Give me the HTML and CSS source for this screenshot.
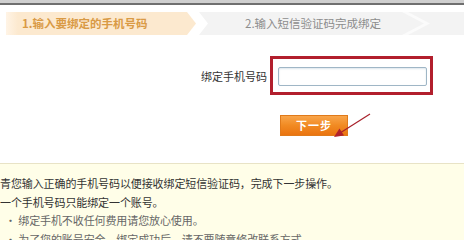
FILE: index.html
```html
<!DOCTYPE html>
<html>
<head>
    <meta charset="utf-8">
    <link rel="stylesheet" href="styles.css">
</head>
<body>
    <div class="topbar"></div>

    <div class="steps">
        <div class="step step-on">1.输入要绑定的手机号码</div>
        <div class="step step-off">2.输入短信验证码完成绑定</div>
    </div>

    <div class="form">
        <div class="row">
            <label class="label" for="phone">绑定手机号码</label>
            <div class="mark"><input class="phone" id="phone" type="text"></div>
        </div>
        <a href="#" class="next">下一步</a>

        <!-- red pointer drawn over the form -->
        <svg class="pointer" width="464" height="110" viewBox="0 0 464 110">
            <line x1="370" y1="58" x2="340" y2="77" stroke="#a8202a" stroke-width="1.2"/>
            <polygon points="334,81 344,79.5 339.5,72.5" fill="#b0222c"/>
        </svg>
    </div>

    <div class="tips">
        <p class="tip-main">青您输入正确的手机号码以便接收绑定短信验证码，完成下一步操作。</p>
        <p class="tip-main">一个手机号码只能绑定一个账号。</p>
        <p class="tip-item">• 绑定手机不收任何费用请您放心使用。</p>
        <p class="tip-item">• 为了您的账号安全，绑定成功后，请不要随意修改联系方式。</p>
    </div>
</body>
</html>
```

FILE: styles.css
```css
body, html {
margin: 0;
padding: 0;
background: #fff;
font-family: "Noto Sans CJK SC", "DejaVu Sans", sans-serif;
}

.topbar {
height: 3px;
background-color: #cfcfcf;
border-bottom: 2px solid #6f6f6f;
}

.steps {
display: flex;
margin-top: 7px;
height: 23px;
padding-left: 6px;
}

.step {
height: 23px;
line-height: 23px;
font-size: 11.5px;
white-space: nowrap;
}

.step-on {
width: 190px;
padding-left: 16px;
box-sizing: border-box;
font-weight: bold;
color: #d99a45;
background: linear-gradient(to right, #fff4e6, #fce9cf 12px, #fce9cf);
clip-path: polygon(0 0, 181px 0, 100% 50%, 181px 100%, 0 100%);
}

.step-off {
position: relative;
flex: 1;
margin-left: 3px;
padding-left: 46px;
color: #8c8c8c;
background-color: #f3f3f3;
clip-path: polygon(0 0, 100% 0, 100% 100%, 0 100%, 9px 50%);
}

.step-off::after {
content: "";
position: absolute;
left: 203px;
top: 0;
width: 28px;
height: 23px;
background-color: #fbfbfb;
clip-path: polygon(0 0, 6px 0, 100% 50%, 6px 100%, 0 100%, 22px 50%);
}

.form {
position: relative;
}

.row {
display: flex;
align-items: center;
margin-top: 21px;
}

.label {
width: 267px;
text-align: right;
font-size: 11px;
color: #333;
}

.mark {
margin-left: 3px;
width: 163px;
height: 39px;
box-sizing: border-box;
border: 3px solid #b21f2d;
padding: 8px 3px 6px 5px;
}

.phone {
display: block;
width: 149px;
height: 19px;
box-sizing: border-box;
margin: 0;
padding: 0 4px;
border: 1px solid #9fb6c6;
border-radius: 2px;
box-shadow: inset 0 1px 2px #dde6ec;
outline: none;
}

.next {
display: block;
margin-top: 20px;
margin-left: 280px;
width: 68px;
height: 21px;
box-sizing: border-box;
line-height: 19px;
text-align: center;
text-decoration: none;
font-size: 11px;
font-weight: bold;
letter-spacing: 1px;
color: #fff;
border: 1px solid #e07a1a;
background: linear-gradient(to bottom, #f9a54a, #f18a22 50%, #ea7410);
}

.pointer {
position: absolute;
left: 0;
top: 0;
pointer-events: none;
}

.tips {
margin-top: 27px;
height: 77px;
box-sizing: border-box;
overflow: hidden;
padding-top: 10px;
background-color: #fffee8;
border-top: 1px solid #e8e3c6;
}

.tips p {
margin: 0;
line-height: 18.5px;
font-size: 11px;
letter-spacing: -0.1px;
white-space: nowrap;
}

.tip-main {
color: #333;
}

.tip-item {
padding-left: 5px;
color: #666;
}
```
